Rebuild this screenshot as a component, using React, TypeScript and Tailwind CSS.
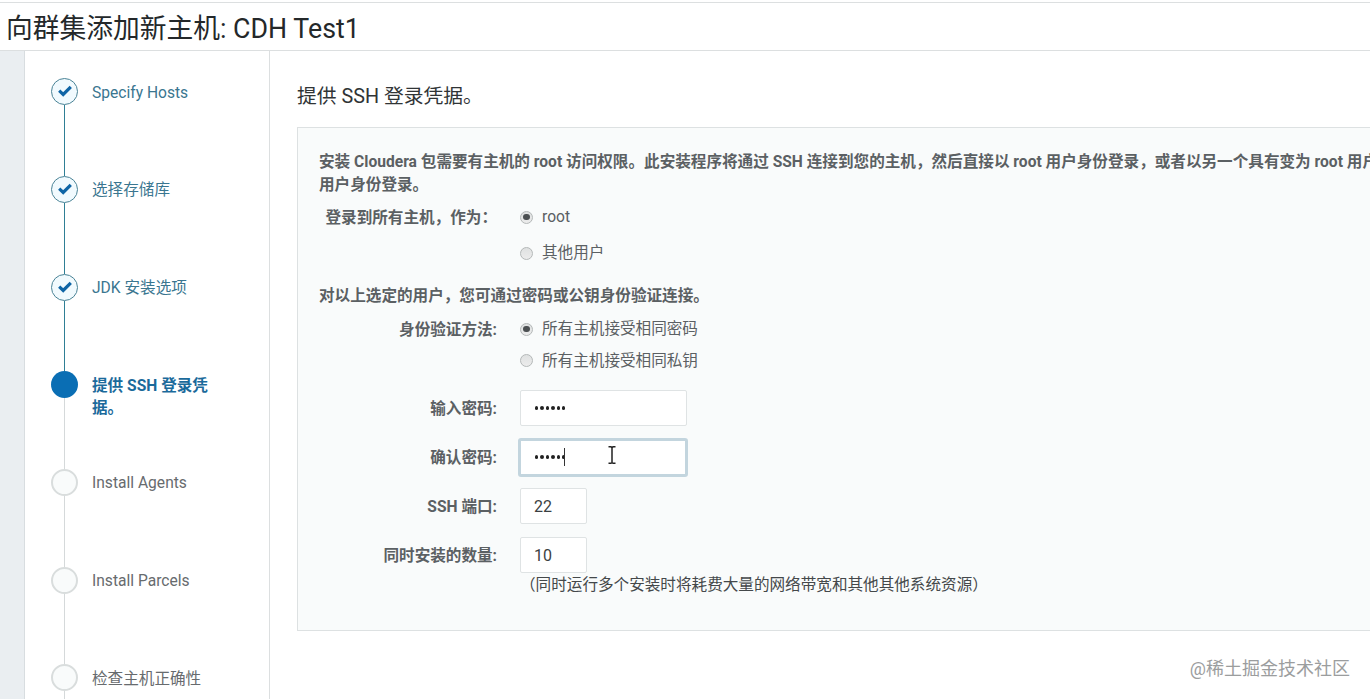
import { ReactNode } from 'react';
import clsx from 'clsx';

type StepState = 'done' | 'current' | 'todo';

const STEPS: { label: string; state: StepState }[] = [
    { label: 'Specify Hosts', state: 'done' },
    { label: '选择存储库', state: 'done' },
    { label: 'JDK 安装选项', state: 'done' },
    { label: '提供 SSH 登录凭据。', state: 'current' },
    { label: 'Install Agents', state: 'todo' },
    { label: 'Install Parcels', state: 'todo' },
    { label: '检查主机正确性', state: 'todo' },
];

function StepMarker({ state }: { state: StepState }) {
    if (state === 'current') {
        return <div className="size-[27px] shrink-0 rounded-full bg-[#0a6eb4]" />;
    }
    if (state === 'todo') {
        return <div className="size-[27px] shrink-0 rounded-full border-[2.5px] border-[#d9dddd] bg-[#f9fbfb]" />;
    }
    return (
        <div className="flex size-[27px] shrink-0 items-center justify-center rounded-full border border-[#4a8396] bg-[#f1fafe]">
            <svg viewBox="0 0 16 14" className="mb-px h-[14px] w-4" fill="none" stroke="#0f65a6" strokeWidth="3.2">
                <path d="M2.2 6.6 6.2 10.4 13.8 2.8" />
            </svg>
        </div>
    );
}

function Step({ label, state, last }: { label: string; state: StepState; last: boolean }) {
    return (
        <li className="flex h-[97.67px]">
            <div className="flex w-[27px] flex-col items-center">
                <StepMarker state={state} />
                <div className={clsx('w-px grow', state === 'done' ? 'bg-[#2f7f95]' : 'bg-[#d5d9da]', last && 'h-10')} />
            </div>
            <span
                className={clsx(
                    'ml-[14px] mt-[3.5px] w-[125px] leading-[22.5px]',
                    state === 'done' && 'text-[#3a7690]',
                    state === 'current' && 'font-bold text-[#1b6a9b]',
                    state === 'todo' && 'text-[#676b6e]'
                )}
            >
                {label}
            </span>
        </li>
    );
}

function Radio({ label, checked }: { label: string; checked?: boolean }) {
    return (
        <label className="flex items-center">
            <span className="flex size-[13px] items-center justify-center rounded-full border border-[#b4b8b8] bg-linear-to-b from-[#dfe1e1] to-[#ececec]">
                {checked && <span className="size-[6.5px] rounded-full bg-[#4c5052]" />}
            </span>
            <span className="ml-[9px] pt-px">{label}</span>
        </label>
    );
}

function Row({ label, className, children }: { label?: string; className: string; children: ReactNode }) {
    return (
        <div className={clsx('flex items-center', className)}>
            <div className="mr-[23px] w-[178px] shrink-0 pt-[1.5px] text-right font-bold">{label}</div>
            {children}
        </div>
    );
}

function Password({ focused }: { focused?: boolean }) {
    return (
        <div
            className={clsx(
                'relative flex items-center bg-white',
                focused
                    ? '-ml-0.5 h-[39px] w-[170px] rounded-[3px] border-[3px] border-[#c3d5de] pl-[14px]'
                    : 'h-[36px] w-[167px] rounded-[2px] border border-[#dfe3e4] pl-[14px]'
            )}
        >
            <div className="flex gap-[2px]">
                {[0, 1, 2, 3, 4, 5].map((i) => (
                    <span key={i} className="size-[3.4px] rounded-full bg-[#222]" />
                ))}
            </div>
            {focused && (
                <>
                    <span className="-ml-px h-[18px] w-px bg-[#333]" />
                    <svg viewBox="0 0 8 18" className="absolute left-[87px] top-[5px] h-[18px] w-2" fill="none" stroke="#222" strokeWidth="1.5">
                        <path d="M.5.8H3L4 1.6 5 .8h2.5M4 1.6v14.8M.5 17.2H3l1-.8 1 .8h2.5" />
                    </svg>
                </>
            )}
        </div>
    );
}

function NumberBox({ value }: { value: string }) {
    return (
        <div className="flex h-[36px] w-[67px] items-center rounded-[2px] border border-[#dfe3e4] bg-white pt-[2px] pl-[13px] text-[16px] text-[#3b3f41]">
            {value}
        </div>
    );
}

export default function App() {
    return (
        <div className="relative flex h-[699px] w-[1370px] flex-col overflow-hidden bg-white font-['Roboto','Noto_Sans_CJK_SC',sans-serif] text-[15.6px] leading-[22.5px] text-[#5b6063]">
            <header className="mt-[2px] flex h-[49px] shrink-0 items-center border-y border-[#dcdfe0] pl-[6px]">
                <h1 className="pt-[6px] text-[26.75px] leading-none font-normal text-[#24282a]">向群集添加新主机: CDH Test1</h1>
            </header>

            <div className="flex min-h-0 grow">
                <div className="w-[25px] shrink-0 border-r border-[#d8dde0] bg-[#eaeef1]" />
                <nav className="w-[245px] shrink-0 border-r border-[#dcdfe0] pl-[26px]">
                    <ol className="pt-[27.25px]">
                        {STEPS.map((step, i) => (
                            <Step key={step.label} {...step} last={i === STEPS.length - 1} />
                        ))}
                    </ol>
                </nav>

                <main className="min-w-0 grow pl-[27px] whitespace-nowrap">
                    <h2 className="pt-[33px] text-[19.8px] leading-[26px] font-normal text-[#303436]">提供 SSH 登录凭据。</h2>
                    <section className="mt-[17px] h-[504px] w-[1200px] border border-[#dde1e2] bg-[#f9fbfb] pl-[21px]">
                        <p className="mt-[23px] font-bold">
                            安装 Cloudera 包需要有主机的 root 访问权限。此安装程序将通过 SSH 连接到您的主机，然后直接以 root 用户身份登录，或者以另一个具有变为 root 用户
                            <br />
                            用户身份登录。
                        </p>
                        <Row label="登录到所有主机，作为：" className="mt-[10px] h-[22px]">
                            <Radio label="root" checked />
                        </Row>
                        <Row className="mt-[14px] h-[22px]">
                            <Radio label="其他用户" />
                        </Row>
                        <p className="mt-[20.5px] font-bold">对以上选定的用户，您可通过密码或公钥身份验证连接。</p>
                        <Row label="身份验证方法:" className="mt-[11px] h-[22px]">
                            <Radio label="所有主机接受相同密码" checked />
                        </Row>
                        <Row className="mt-[9.5px] h-[22px]">
                            <Radio label="所有主机接受相同私钥" />
                        </Row>
                        <Row label="输入密码:" className="mt-[12px] h-[49px]">
                            <Password />
                        </Row>
                        <Row label="确认密码:" className="h-[49px]">
                            <Password focused />
                        </Row>
                        <Row label="SSH 端口:" className="h-[49px]">
                            <NumberBox value="22" />
                        </Row>
                        <Row label="同时安装的数量:" className="h-[49px]">
                            <NumberBox value="10" />
                        </Row>
                        <p className="-mt-[5.5px] pl-[201px] text-[#44484a]">（同时运行多个安装时将耗费大量的网络带宽和其他其他系统资源）</p>
                    </section>
                </main>
            </div>

            <div className="absolute right-[20px] bottom-[18px] text-[18px] leading-6 text-[#9b9d9e]">@稀土掘金技术社区</div>
        </div>
    );
}
